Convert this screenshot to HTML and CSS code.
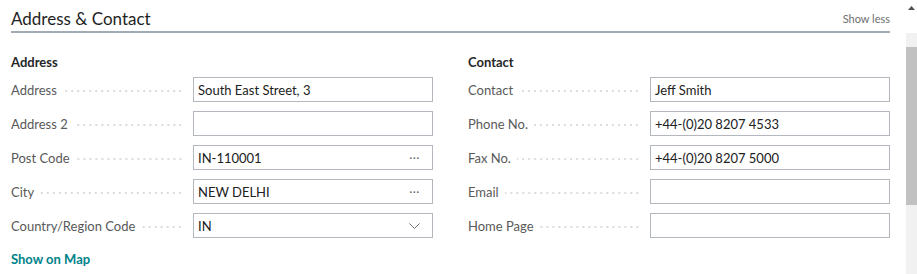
FILE: index.html
```html
<!DOCTYPE html>
<html lang="en">
<head>
<meta charset="utf-8">
<title>Address &amp; Contact</title>
<link rel="stylesheet" href="styles.css">
</head>
<body>
<div class="page">
  <main class="content">
    <header class="section-head">
      <h1 class="section-title">Address &amp; Contact</h1>
      <a class="show-less">Show less</a>
    </header>
    <div class="columns">
      <section class="group">
        <h2 class="group-title">Address</h2>
        <div class="fields">
          <div class="label"><span>Address</span><i class="leader"></i></div>
          <div class="input">South East Street, 3</div>
          <div class="label"><span>Address 2</span><i class="leader"></i></div>
          <div class="input"></div>
          <div class="label"><span>Post Code</span><i class="leader"></i></div>
          <div class="input"><span class="value">IN-110001</span><span class="more">···</span></div>
          <div class="label"><span>City</span><i class="leader"></i></div>
          <div class="input"><span class="value">NEW DELHI</span><span class="more">···</span></div>
          <div class="label"><span>Country/Region Code</span><i class="leader"></i></div>
          <div class="input"><span class="value">IN</span>
            <svg class="chevron" width="11" height="6" viewBox="0 0 11 6"><path d="M0.5 0.5 L5.5 5.5 L10.5 0.5" fill="none" stroke="#6b6b6b" stroke-width="1"/></svg>
          </div>
        </div>
      </section>
      <section class="group">
        <h2 class="group-title">Contact</h2>
        <div class="fields">
          <div class="label"><span>Contact</span><i class="leader"></i></div>
          <div class="input">Jeff Smith</div>
          <div class="label"><span>Phone No.</span><i class="leader"></i></div>
          <div class="input">+44-(0)20 8207 4533</div>
          <div class="label"><span>Fax No.</span><i class="leader"></i></div>
          <div class="input">+44-(0)20 8207 5000</div>
          <div class="label"><span>Email</span><i class="leader"></i></div>
          <div class="input"></div>
          <div class="label"><span>Home Page</span><i class="leader"></i></div>
          <div class="input"></div>
        </div>
      </section>
    </div>
    <a class="map-link">Show on Map</a>
  </main>
  <div class="scrollbar">
    <div class="scroll-up"><svg width="7" height="4" viewBox="0 0 7 4"><path d="M0 4 L3.5 0 L7 4 Z" fill="#505050"/></svg></div>
    <div class="scroll-track"><div class="scroll-thumb"></div></div>
  </div>
</div>
</body>
</html>
```
FILE: styles.css
```css
html, body {
  margin: 0;
  padding: 0;
  background: #ffffff;
}
body {
  font-family: "Lato", "Segoe UI", "Open Sans", sans-serif;
  color: #212121;
  overflow: hidden;
}
.page {
  display: flex;
  width: 917px;
  height: 274px;
}
.content {
  flex: 1;
  padding: 0 16px 0 11px;
}
.section-head {
  display: flex;
  justify-content: space-between;
  align-items: flex-end;
  height: 31px;
  border-bottom: 2px solid #a2aab4;
}
.section-title {
  margin: 0 0 2px 0;
  font-size: 17px;
  font-weight: 400;
  line-height: 20px;
  color: #1f1f1f;
}
.show-less {
  font-size: 11px;
  line-height: 14px;
  color: #6e6e6e;
  margin-bottom: 5px;
}
.columns {
  display: grid;
  grid-template-columns: 422px 422px;
  column-gap: 35px;
}
.group-title {
  margin: 21px 0 7px 0;
  font-size: 13px;
  font-weight: 700;
  line-height: 16px;
  color: #262626;
}
.fields {
  display: grid;
  grid-template-columns: 182px 240px;
  grid-auto-rows: 25px;
  row-gap: 9px;
}
.label {
  display: flex;
  align-items: center;
  font-size: 13px;
  color: #595959;
  padding-right: 10px;
}
.leader {
  flex: 1;
  height: 2px;
  margin: 3px 0 0 6px;
  background-image: radial-gradient(circle, #c8c8c8 0.6px, transparent 0.9px);
  background-size: 6px 2px;
  background-repeat: repeat-x;
  background-position: right center;
}
.input {
  box-sizing: border-box;
  display: flex;
  align-items: center;
  border: 1px solid #b3b8bf;
  padding: 0 12px 0 4px;
  font-size: 13px;
  color: #212121;
}
.value {
  flex: 1;
}
.more {
  color: #707070;
  font-size: 12px;
  letter-spacing: 0.5px;
}
.chevron {
  margin-right: 0;
}
.map-link {
  display: inline-block;
  margin-top: 13px;
  font-size: 13px;
  font-weight: 700;
  line-height: 16px;
  color: #00828a;
}
.scrollbar {
  width: 11px;
  display: flex;
  flex-direction: column;
}
.scroll-up {
  height: 33px;
  display: flex;
  justify-content: center;
  padding-top: 6px;
  box-sizing: border-box;
}
.scroll-track {
  flex: 1;
  background: #f1f1f1;
  padding-top: 14px;
}
.scroll-thumb {
  height: 158px;
  background: #c1c1c1;
}
```
